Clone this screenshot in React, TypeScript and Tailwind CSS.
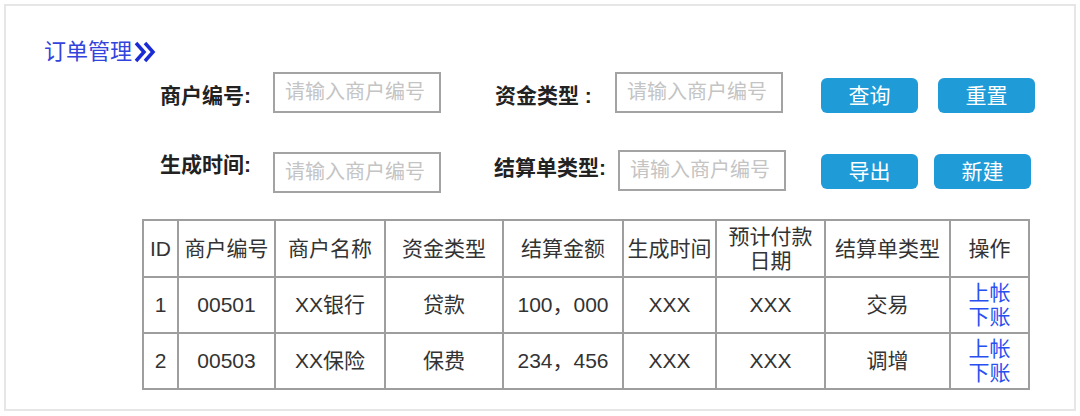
const font = "font-['Liberation_Sans','Noto_Sans_CJK_SC',sans-serif]";

function Field({ label, w, className }: { label: string; w: string; className?: string }) {
  return (
    <>
      <span className={`${w} text-[21px] font-bold leading-[30px] text-[#222] whitespace-nowrap ${className ?? ""}`}>
        {label}
      </span>
    </>
  );
}

function Input({ className }: { className?: string }) {
  return (
    <input
      placeholder="请输入商户编号"
      className={`w-[168px] h-[41px] border-2 border-[#a3a3a3] px-[10px] text-[20px] text-[#333] placeholder:text-[#c4c4c4] outline-none ${className ?? ""}`}
    />
  );
}

function Btn({ children, className }: { children: string; className?: string }) {
  return (
    <button className={`w-[97px] h-[35px] rounded-[6px] bg-[#1f9bd7] text-white text-[21px] leading-none ${className ?? ""}`}>
      {children}
    </button>
  );
}

const rows = [
  { id: "1", no: "00501", name: "XX银行", type: "贷款", amt: "100，000", time: "XXX", pay: "XXX", kind: "交易" },
  { id: "2", no: "00503", name: "XX保险", type: "保费", amt: "234，456", time: "XXX", pay: "XXX", kind: "调增" },
];

const cols = [35, 97, 110, 118, 120, 93, 109, 125, 79];

export default function App() {
  const td = "border-2 border-[#9e9e9e] text-center align-middle p-0";
  return (
    <div className={`${font} bg-white w-[1080px] h-[416px] pt-[4px] pl-[4px]`}>
      <div className="w-[1072px] h-[407px] border-2 border-[#e6e6e6] pt-[31px] pl-[38px]">
        <div className="flex items-center h-[30px]">
          <span className="text-[22px] leading-[30px] text-[#3344dd]">订单管理</span>
          <svg width="24" height="22" viewBox="0 0 24 22" className="ml-[1px]">
            <polyline points="3,2 11,11 3,20" fill="none" stroke="#1a2bd6" strokeWidth="3.5" />
            <polyline points="12,2 20,11 12,20" fill="none" stroke="#1a2bd6" strokeWidth="3.5" />
          </svg>
        </div>

        <div className="flex items-end h-[41px] mt-[5px] ml-[116px]">
          <Field label="商户编号:" w="w-[113px]" className="mb-[2px]" />
          <Input />
          <Field label="资金类型 :" w="w-[120px] ml-[54px]" className="mb-[2px]" />
          <Input className="w-[167px]" />
          <Btn className="ml-[38px]">查询</Btn>
          <Btn className="ml-[20px]">重置</Btn>
        </div>

        <div className="flex items-start h-[42px] mt-[37px] ml-[116px]">
          <Field label="生成时间:" w="w-[113px]" />
          <Input className="mt-[2px] h-[40px]" />
          <Field label="结算单类型:" w="w-[124px] ml-[53px]" className="mt-[3px]" />
          <Input className="w-[167px] h-[40px]" />
          <Btn className="ml-[35px] mt-[4px]">导出</Btn>
          <Btn className="ml-[16px] mt-[4px]">新建</Btn>
        </div>

        <table className="mt-[27px] ml-[98px] table-fixed border-collapse text-[21px] text-[#333] w-[886px]">
          <colgroup>
            {cols.map((c, i) => (
              <col key={i} style={{ width: c }} />
            ))}
          </colgroup>
          <thead>
            <tr className="h-[57px]">
              <th className={`${td} font-normal`}>ID</th>
              <th className={`${td} font-normal`}>商户编号</th>
              <th className={`${td} font-normal`}>商户名称</th>
              <th className={`${td} font-normal`}>资金类型</th>
              <th className={`${td} font-normal`}>结算金额</th>
              <th className={`${td} font-normal`}>生成时间</th>
              <th className={`${td} font-normal leading-[24px]`}>
                预计付款
                <br />
                日期
              </th>
              <th className={`${td} font-normal`}>结算单类型</th>
              <th className={`${td} font-normal`}>操作</th>
            </tr>
          </thead>
          <tbody>
            {rows.map((r) => (
              <tr key={r.id} className="h-[56px]">
                <td className={td}>{r.id}</td>
                <td className={td}>{r.no}</td>
                <td className={td}>{r.name}</td>
                <td className={td}>{r.type}</td>
                <td className={td}>{r.amt}</td>
                <td className={td}>{r.time}</td>
                <td className={td}>{r.pay}</td>
                <td className={td}>{r.kind}</td>
                <td className={`${td} leading-[24px] text-[#2a4ff0]`}>
                  <div>上帐</div>
                  <div>下账</div>
                </td>
              </tr>
            ))}
          </tbody>
        </table>
      </div>
    </div>
  );
}
